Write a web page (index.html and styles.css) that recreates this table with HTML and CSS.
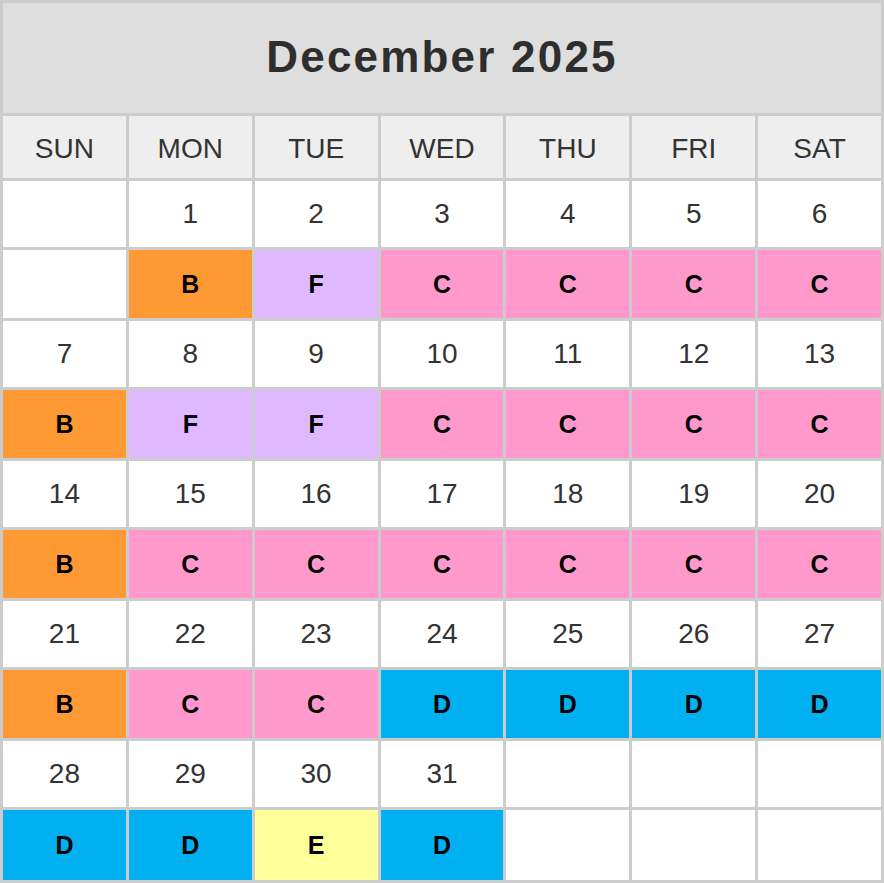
FILE: index.html
```html
<!DOCTYPE html>
<html lang="en">
<head>
<meta charset="utf-8">
<title>December 2025</title>
<link rel="stylesheet" href="styles.css">
</head>
<body>
<div class="calendar">
  <div class="title">December 2025</div>
  <div class="dow">SUN</div><div class="dow">MON</div><div class="dow">TUE</div><div class="dow">WED</div><div class="dow">THU</div><div class="dow">FRI</div><div class="dow">SAT</div>

  <div class="date"></div><div class="date">1</div><div class="date">2</div><div class="date">3</div><div class="date">4</div><div class="date">5</div><div class="date">6</div>
  <div class="ev"></div><div class="ev b">B</div><div class="ev f">F</div><div class="ev c">C</div><div class="ev c">C</div><div class="ev c">C</div><div class="ev c">C</div>

  <div class="date">7</div><div class="date">8</div><div class="date">9</div><div class="date">10</div><div class="date">11</div><div class="date">12</div><div class="date">13</div>
  <div class="ev b">B</div><div class="ev f">F</div><div class="ev f">F</div><div class="ev c">C</div><div class="ev c">C</div><div class="ev c">C</div><div class="ev c">C</div>

  <div class="date">14</div><div class="date">15</div><div class="date">16</div><div class="date">17</div><div class="date">18</div><div class="date">19</div><div class="date">20</div>
  <div class="ev b">B</div><div class="ev c">C</div><div class="ev c">C</div><div class="ev c">C</div><div class="ev c">C</div><div class="ev c">C</div><div class="ev c">C</div>

  <div class="date">21</div><div class="date">22</div><div class="date">23</div><div class="date">24</div><div class="date">25</div><div class="date">26</div><div class="date">27</div>
  <div class="ev b">B</div><div class="ev c">C</div><div class="ev c">C</div><div class="ev d">D</div><div class="ev d">D</div><div class="ev d">D</div><div class="ev d">D</div>

  <div class="date">28</div><div class="date">29</div><div class="date">30</div><div class="date">31</div><div class="date"></div><div class="date"></div><div class="date"></div>
  <div class="ev last d">D</div><div class="ev last d">D</div><div class="ev last e">E</div><div class="ev last d">D</div><div class="ev last"></div><div class="ev last"></div><div class="ev last"></div>
</div>
</body>
</html>
```
FILE: styles.css
```css
html, body {
  margin: 0;
  padding: 0;
  background: #ffffff;
}

.calendar {
  width: 884px;
  box-sizing: border-box;
  display: grid;
  grid-template-columns: repeat(7, 1fr);
  grid-template-rows: 110px 62px repeat(4, 66px 68px) 66px 70px;
  gap: 3px;
  padding: 3px;
  background: #cccccc;
  font-family: "Liberation Sans", Arial, sans-serif;
}

.calendar > div {
  display: flex;
  align-items: center;
  justify-content: center;
  background: #ffffff;
}

.calendar > .title {
  grid-column: 1 / -1;
  background: #dedede;
  color: #2e2e2e;
  font-size: 44px;
  font-weight: bold;
  letter-spacing: 2.2px;
  padding-bottom: 3px;
  box-sizing: border-box;
}

.calendar > .dow {
  background: #eeeeee;
  color: #333333;
  font-size: 28px;
  padding-top: 4px;
  box-sizing: border-box;
}

.calendar > .date {
  color: #333333;
  font-size: 28px;
}

.calendar > .ev {
  color: #000000;
  font-size: 25px;
  font-weight: bold;
}

.calendar > .b { background: #ff9933; }
.calendar > .f { background: #e0b8ff; }
.calendar > .c { background: #ff99cc; }
.calendar > .d { background: #00b0f0; }
.calendar > .e { background: #ffff99; }
```
